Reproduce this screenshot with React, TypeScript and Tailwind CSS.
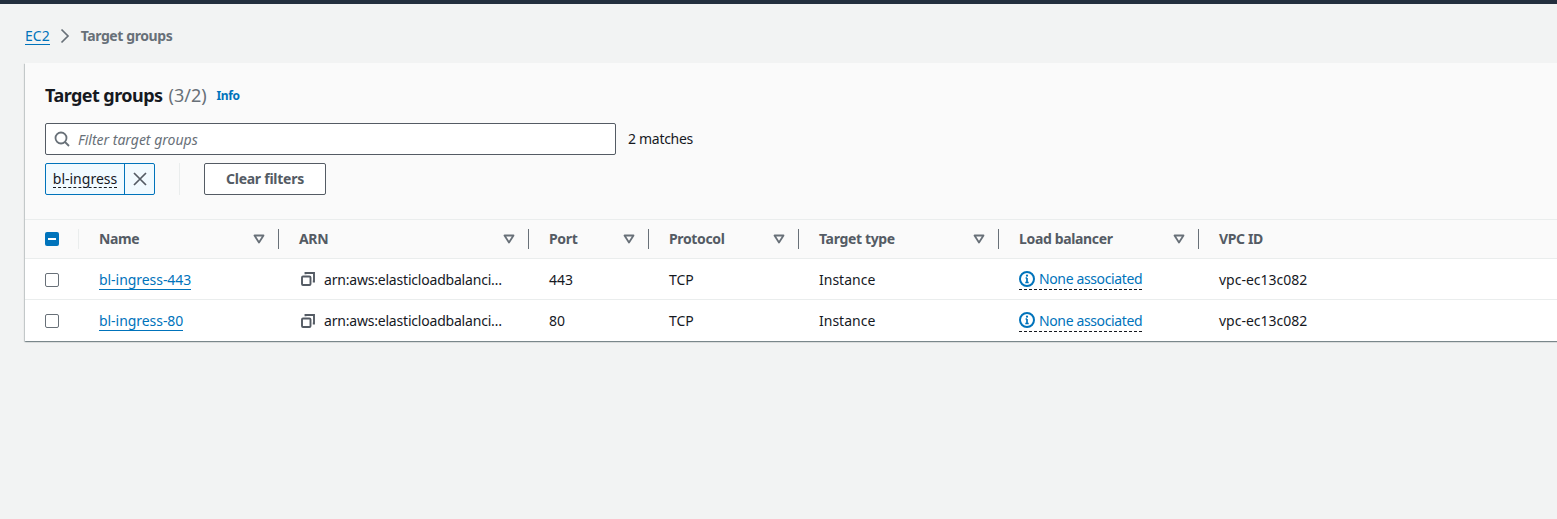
const font = "font-['Noto_Sans','Open_Sans',sans-serif]";

const columns = [
  { label: "Name", width: "w-[200px]" },
  { label: "ARN", width: "w-[250px]" },
  { label: "Port", width: "w-[120px]" },
  { label: "Protocol", width: "w-[150px]" },
  { label: "Target type", width: "w-[200px]" },
  { label: "Load balancer", width: "w-[200px]" },
];

const rows = [
  { name: "bl-ingress-443", port: "443" },
  { name: "bl-ingress-80", port: "80" },
];

function SortIcon() {
  return (
    <svg width="12" height="10" viewBox="0 0 12 10" fill="none" className="shrink-0">
      <path d="M1.5 1.5h9L6 8.5z" fill="#fafafa" stroke="#687078" strokeWidth="1.8" strokeLinejoin="round" />
    </svg>
  );
}

function CopyIcon() {
  return (
    <svg width="14" height="14" viewBox="0 0 14 14" fill="none" className="shrink-0">
      <rect x="1" y="4.5" width="8.5" height="8.5" rx="1" stroke="#545b64" strokeWidth="1.9" />
      <path d="M4.5 2.2V1h8.5v8.5h-1.2" stroke="#545b64" strokeWidth="1.9" />
    </svg>
  );
}

function InfoIcon() {
  return (
    <svg width="16" height="16" viewBox="0 0 16 16" fill="none" className="shrink-0">
      <circle cx="8" cy="8" r="7" stroke="#0073bb" strokeWidth="2" />
      <path d="M8 7v4.5M6.3 11.5h3.4M6.6 7H8" stroke="#0073bb" strokeWidth="1.7" />
      <circle cx="8" cy="4.7" r="1.1" fill="#0073bb" />
    </svg>
  );
}

export default function App() {
  return (
    <div className={`${font} h-[519px] w-[1557px] overflow-hidden bg-[#f2f3f3] text-[14px] text-[#16191f]`}>
      <div className="h-[4px] bg-[#232f3e]" />

      <nav className="flex h-[59px] items-center pt-[4px] pl-[25px]">
        <a className="border-b border-[#0073bb] leading-[17px] text-[#0073bb]">EC2</a>
        <svg width="16" height="16" viewBox="0 0 16 16" fill="none" className="ml-[7px] mr-[8px]">
          <path d="M4.5 1.5L11 8l-6.500 6.500" stroke="#687078" strokeWidth="1.700" />
        </svg>
        <span className="font-bold tracking-[-0.4px] text-[#687078]">Target groups</span>
      </nav>

      <section className="ml-[25px] w-[1560px] bg-white shadow-[0_1px_1px_0_rgba(0,28,36,0.3),1px_1px_1px_0_rgba(0,28,36,0.15),-1px_1px_1px_0_rgba(0,28,36,0.15)]">
        <div className="h-[157px] border-b border-[#eaeded] bg-[#fafafa] pl-[20px] pt-[19px]">
          <div className="flex h-[26px] items-center">
            <h1 className="text-[18px] font-bold leading-[26px] tracking-[-0.55px]">Target groups</h1>
            <span className="ml-[6px] text-[18px] leading-[26px] text-[#687078]">(3/2)</span>
            <a className="ml-[10px] mt-[2px] text-[12px] font-bold tracking-[-0.4px] text-[#0073bb]">Info</a>
          </div>

          <div className="mt-[15px] flex items-center">
            <div className="flex h-[32px] w-[571px] items-center rounded-[2px] border border-[#545b64] bg-white pl-[8px]">
              <svg width="16" height="16" viewBox="0 0 16 16" fill="none">
                <circle cx="7" cy="7" r="5.500" stroke="#687078" strokeWidth="1.800" />
                <path d="M11 11l4 4" stroke="#687078" strokeWidth="1.800" />
              </svg>
              <span className="ml-[8px] italic text-[#687078]">Filter target groups</span>
            </div>
            <span className="mb-[2px] ml-[12px] tracking-[-0.3px]">2 matches</span>
          </div>

          <div className="mt-[8px] flex items-center">
            <div className="flex h-[32px] w-[110px] items-stretch rounded-[2px] border border-[#0073bb] bg-[#f1faff]">
              <div className="flex w-[79px] items-center justify-center border-r border-[#0073bb]">
                <span className="border-b border-dashed border-[#16191f] leading-[17px]">bl-ingress</span>
              </div>
              <div className="flex flex-1 items-center justify-center">
                <svg width="16" height="16" viewBox="0 0 16 16" fill="none">
                  <path d="M2 2l12 12M14 2L2 14" stroke="#545b64" strokeWidth="1.700" />
                </svg>
              </div>
            </div>
            <div className="ml-[24px] h-[32px] w-px bg-[#eaeded]" />
            <button className="ml-[24px] h-[32px] w-[122px] rounded-[2px] border border-[#545b64] bg-white pb-[1px] font-bold tracking-[-0.25px] text-[#545b64]">
              Clear filters
            </button>
          </div>
        </div>

        <div className="flex h-[39px] items-center border-b border-[#eaeded] bg-[#fafafa] pb-[1px] text-[#545b64]">
          <div className="flex h-[20px] w-[54px] items-center border-r border-[#eaeded] pl-[20px]">
            <div className="flex h-[14px] w-[14px] items-center justify-center rounded-[2px] bg-[#0073bb]">
              <div className="h-[2px] w-[8px] bg-white" />
            </div>
          </div>
          {columns.map((col) => (
            <div key={col.label} className={`${col.width} flex h-[20px] items-center justify-between border-r border-[#687078] pl-[20px] pr-[13px] font-bold tracking-[-0.35px]`}>
              <span>{col.label}</span>
              <SortIcon />
            </div>
          ))}
          <div className="pl-[20px] font-bold tracking-[-0.35px]">VPC ID</div>
        </div>

        {rows.map((row, i) => (
          <div key={row.name} className={`flex h-[41px] items-center ${i === 0 ? "border-b border-[#eaeded]" : ""}`}>
            <div className="w-[54px] pl-[20px]">
              <div className={`h-[14px] w-[14px] rounded-[2px] border border-[#687078] bg-white ${i === 0 ? "mt-[1px]" : ""}`} />
            </div>
            <div className="w-[200px] pl-[20px]">
              <a className="border-b border-[#0073bb] leading-[17px] tracking-[-0.05px] text-[#0073bb]">{row.name}</a>
            </div>
            <div className="flex w-[250px] items-center pl-[22px]">
              <CopyIcon />
              <span className="ml-[9px] whitespace-nowrap tracking-[-0.2px]">arn:aws:elasticloadbalanci…</span>
            </div>
            <div className="w-[120px] pl-[20px]">{row.port}</div>
            <div className="w-[150px] pl-[20px]">TCP</div>
            <div className="w-[200px] pl-[20px]">Instance</div>
            <div className="flex w-[200px] items-center pl-[20px]">
              <a className="flex h-[22px] items-center gap-[4px] border-b border-dashed border-[#16191f] tracking-[-0.37px] text-[#0073bb]">
                <InfoIcon />
                None associated
              </a>
            </div>
            <div className="pl-[20px]">vpc-ec13c082</div>
          </div>
        ))}
      </section>
    </div>
  );
}
